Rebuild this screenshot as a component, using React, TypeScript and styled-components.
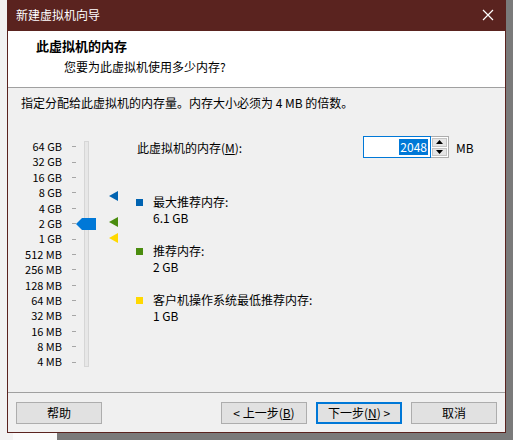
import React from 'react'
import styled, { createGlobalStyle } from 'styled-components'

const FONT = `"Segoe UI", "Noto Sans CJK SC", "Noto Sans", sans-serif`

const GlobalStyle = createGlobalStyle`
	html, body {
		margin: 0;
		padding: 0;
		width: 513px;
		height: 440px;
		overflow: hidden;
		background: #6f6f6f;
	}
	* { box-sizing: border-box; }
`

const SCALE = [
	'64 GB', '32 GB', '16 GB', '8 GB', '4 GB', '2 GB', '1 GB',
	'512 MB', '256 MB', '128 MB', '64 MB', '32 MB', '16 MB', '8 MB', '4 MB'
]

const LEGEND = [
	{ color: '#0063b1', label: '最大推荐内存:', value: '6.1 GB' },
	{ color: '#4a8c0e', label: '推荐内存:', value: '2 GB' },
	{ color: '#ffd800', label: '客户机操作系统最低推荐内存:', value: '1 GB' }
]

//=> DOM
export default function App() {
	return (
		<>
			<GlobalStyle />
			<Desktop>
				<Window>
					<TitleBar>
						<span>新建虚拟机向导</span>
						<CloseIcon width='12' height='12' viewBox='0 0 12 12'>
							<path d='M1 1 L11 11 M11 1 L1 11' stroke='#fff' strokeWidth='1.2' />
						</CloseIcon>
					</TitleBar>

					<Header>
						<HeaderTitle>此虚拟机的内存</HeaderTitle>
						<HeaderSub>您要为此虚拟机使用多少内存?</HeaderSub>
					</Header>

					<Body>
						<Intro>指定分配给此虚拟机的内存量。内存大小必须为 4 MB 的倍数。</Intro>
						<Content>
							<Scale>
								<Labels>
									{SCALE.map(s => (
										<ScaleRow key={s}>{s}</ScaleRow>
									))}
								</Labels>
								<Ticks>
									{SCALE.map(s => (
										<TickRow key={s}>
											<Tick />
										</TickRow>
									))}
								</Ticks>
								<Track />
								<Thumb width='20' height='12' viewBox='0 0 20 12'>
									<path d='M0 6 L6 0 H20 V12 H6 Z' fill='#0078d7' />
								</Thumb>
								<Marker $top={52} $color='#0063b1' />
								<Marker $top={78} $color='#4a8c0e' />
								<Marker $top={94} $color='#ffd800' />
							</Scale>

							<Panel>
								<MemRow>
									<MemLabel>
										此虚拟机的内存(<u>M</u>):
									</MemLabel>
									<Input>
										<Selected>2048</Selected>
									</Input>
									<Spinner>
										<SpinBtn>
											<svg width='7' height='4' viewBox='0 0 7 4'>
												<path d='M0 4 L3.5 0 L7 4 Z' fill='#000' />
											</svg>
										</SpinBtn>
										<SpinBtn>
											<svg width='7' height='4' viewBox='0 0 7 4'>
												<path d='M0 0 L3.5 4 L7 0 Z' fill='#000' />
											</svg>
										</SpinBtn>
									</Spinner>
									<Unit>MB</Unit>
								</MemRow>

								<Legend>
									{LEGEND.map(l => (
										<LegendItem key={l.label}>
											<Swatch $color={l.color} />
											<div>
												<div>{l.label}</div>
												<div>{l.value}</div>
											</div>
										</LegendItem>
									))}
								</Legend>
							</Panel>
						</Content>
					</Body>

					<Footer>
						<Button>帮助</Button>
						<Spacer />
						<Button>
							&lt; 上一步(<u>B</u>)
						</Button>
						<Button $primary>
							下一步(<u>N</u>) &gt;
						</Button>
						<Button>取消</Button>
					</Footer>
				</Window>
			</Desktop>
		</>
	)
}

//=> Style
const Desktop = styled.div`
	width: 513px;
	height: 440px;
	padding-left: 7px;
	background: linear-gradient(to right, #f2f2f2 0 13px, #fafafa 13px 57px, #7a7a7a 57px);
	font-family: ${FONT};
	font-size: 12px;
	color: #000;
`

const Window = styled.div`
	width: 499px;
	height: 433px;
	border: 1px solid #5a231f;
	border-top: none;
	background: #f0f0f0;
	display: flex;
	flex-direction: column;
`

const TitleBar = styled.div`
	height: 31px;
	flex: none;
	background: #5a231f;
	color: #fff;
	display: flex;
	align-items: center;
	justify-content: space-between;
	padding: 0 11px 1px 8px;
	line-height: 16px;
`

const CloseIcon = styled.svg`
	display: block;
`

const Header = styled.div`
	height: 57px;
	flex: none;
	background: #fff;
	border-bottom: 1px solid #a0a0a0;
	padding-top: 6px;
	line-height: 18px;
`

const HeaderTitle = styled.div`
	padding-left: 28px;
	font-size: 13px;
	font-weight: bold;
`

const HeaderSub = styled.div`
	padding-left: 56px;
	margin-top: 3px;
`

const Body = styled.div`
	flex: 1;
	padding: 7px 0 0 13px;
	line-height: 16px;
`

const Intro = styled.div``

const Content = styled.div`
	display: flex;
	margin-top: 28px;
	margin-left: -13px;
`

const Scale = styled.div`
	position: relative;
	width: 120px;
	display: flex;
	flex: none;
`

const Labels = styled.div`
	width: 54px;
	text-align: right;
	font-size: 11px;
`

const ScaleRow = styled.div`
	height: 15.4px;
	line-height: 15.4px;
	white-space: nowrap;
`

const Ticks = styled.div`
	margin-left: 10px;
	width: 4px;
`

const TickRow = styled.div`
	height: 15.4px;
	display: flex;
	align-items: center;
`

const Tick = styled.div`
	width: 4px;
	height: 1px;
	background: #a6a6a6;
`

const Track = styled.div`
	margin: 2px 0 0 8px;
	width: 5px;
	height: 226px;
	background: #e7e7e7;
	border: 1px solid #d6d6d6;
`

const Thumb = styled.svg`
	position: absolute;
	left: 68px;
	top: 79px;
`

const Marker = styled.div<{ $top: number; $color: string }>`
	position: absolute;
	left: 101px;
	top: ${p => p.$top}px;
	width: 0;
	height: 0;
	border-top: 5px solid transparent;
	border-bottom: 5px solid transparent;
	border-right: 9px solid ${p => p.$color};
`

const Panel = styled.div`
	flex: 1;
	padding-left: 9px;
	margin-top: -3px;
`

const MemRow = styled.div`
	display: flex;
	align-items: center;
	height: 22px;
`

const MemLabel = styled.div`
	width: 226px;
	padding-top: 2px;
	u { text-decoration: underline; }
`

const Input = styled.div`
	width: 68px;
	height: 22px;
	border: 1px solid #0078d7;
	background: #fff;
	display: flex;
	align-items: center;
	justify-content: flex-end;
	padding-right: 2px;
`

const Selected = styled.span`
	background: #0078d7;
	color: #fff;
	line-height: 16px;
	padding: 0 1px;
`

const Spinner = styled.div`
	width: 18px;
	height: 22px;
	display: flex;
	flex-direction: column;
	border: 1px solid #adadad;
	border-left: none;
	background: #fff;
	padding: 1px;
	gap: 1px;
`

const SpinBtn = styled.div`
	flex: 1;
	background: #e5e5e5;
	border: 1px solid #c4c4c4;
	display: flex;
	align-items: center;
	justify-content: center;
`

const Unit = styled.div`
	margin-left: 7px;
	padding-top: 2px;
`

const Legend = styled.div`
	margin-top: 36px;
	display: flex;
	flex-direction: column;
	gap: 17px;
`

const LegendItem = styled.div`
	display: flex;
	align-items: flex-start;
	margin-left: -1px;
`

const Swatch = styled.div<{ $color: string }>`
	width: 7px;
	height: 7px;
	margin: 5px 10px 0 0;
	background: ${p => p.$color};
	flex: none;
`

const Footer = styled.div`
	height: 40px;
	flex: none;
	border-top: 1px solid #a0a0a0;
	display: flex;
	align-items: flex-start;
	gap: 9px;
	padding: 9px 8px 0 8px;
`

const Spacer = styled.div`
	flex: 1;
`

const Button = styled.div<{ $primary?: boolean }>`
	width: 86px;
	height: 22px;
	background: #e1e1e1;
	border: ${p => (p.$primary ? '2px solid #0078d7' : '1px solid #adadad')};
	display: flex;
	align-items: center;
	justify-content: center;
	line-height: 16px;
	u { text-decoration: underline; }
`
